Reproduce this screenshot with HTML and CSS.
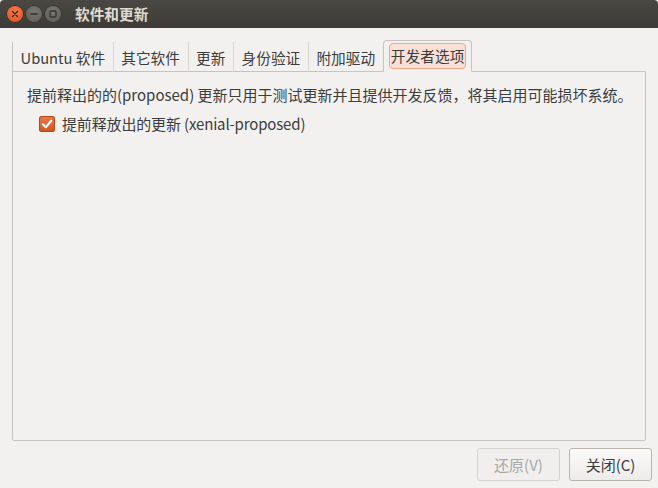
FILE: index.html
```html
<!DOCTYPE html>
<html lang="zh-CN">
<head>
<meta charset="utf-8">
<link rel="stylesheet" href="styles.css">
</head>
<body>
<div class="window">
  <div class="titlebar">
    <div class="wbtns">
      <span class="wbtn close">
        <svg width="16" height="16" viewBox="0 0 16 16"><path d="M5.5 5.5 L10.5 10.5 M10.5 5.5 L5.5 10.5" stroke="#3a2418" stroke-width="1.4" stroke-linecap="round"/></svg>
      </span>
      <span class="wbtn grey">
        <svg width="16" height="16" viewBox="0 0 16 16"><path d="M4.5 8 H11.5" stroke="#35342f" stroke-width="1.6"/></svg>
      </span>
      <span class="wbtn grey">
        <svg width="16" height="16" viewBox="0 0 16 16"><rect x="5" y="5" width="6" height="6" rx="1" fill="none" stroke="#35342f" stroke-width="1.4"/></svg>
      </span>
    </div>
    <div class="title">软件和更新</div>
  </div>
  <div class="content">
    <div class="tabs">
      <div class="tab first">Ubuntu 软件</div>
      <div class="tab">其它软件</div>
      <div class="tab">更新</div>
      <div class="tab">身份验证</div>
      <div class="tab">附加驱动</div>
      <div class="tab active"><span class="focus">开发者选项</span></div>
      <div class="tabfill"></div>
    </div>
    <div class="panel">
      <p class="desc">提前释出的的(proposed) 更新只用于测试更新并且提供开发反馈，将其启用可能损坏系统。</p>
      <label class="check">
        <span class="box">
          <svg width="16" height="16" viewBox="0 0 16 16"><path d="M3.8 8.2 L6.8 11.2 L12.3 4.8" fill="none" stroke="#fff" stroke-width="2.2" stroke-linecap="round" stroke-linejoin="round"/></svg>
        </span>
        <span class="label">提前释放出的更新 (xenial-proposed)</span>
      </label>
    </div>
    <div class="actions">
      <button class="btn disabled">还原(V)</button>
      <button class="btn">关闭(C)</button>
    </div>
  </div>
</div>
</body>
</html>
```
FILE: styles.css
```css
* { box-sizing: border-box; }
html, body { margin: 0; padding: 0; }
body {
  width: 658px;
  height: 488px;
  overflow: hidden;
  font-family: "Noto Sans CJK SC", "Noto Sans", sans-serif;
  background: #f2f1f0;
}
.window {
  width: 658px;
  height: 488px;
  display: flex;
  flex-direction: column;
  background: #f2f1f0;
}
.titlebar {
  height: 28px;
  background: linear-gradient(#494843, #3c3b37);
  display: flex;
  align-items: center;
  padding-left: 7px;
  border-radius: 4px 4px 0 0;
}
.wbtns { display: flex; gap: 3px; }
.wbtn {
  width: 16px;
  height: 16px;
  border-radius: 50%;
  display: flex;
}
.wbtn.close {
  background: radial-gradient(circle at 50% 35%, #f77b47, #e0501a);
  box-shadow: 0 0 0 0.5px #2d1b10;
}
.wbtn.grey {
  background: radial-gradient(circle at 50% 35%, #7a7873, #5c5b56);
  box-shadow: 0 0 0 0.5px #2b2a27;
}
.title {
  margin-left: 14px;
  color: #dfdbd2;
  font-size: 14.67px;
  font-weight: bold;
  line-height: 1;
  margin-top: 1px;
}
.content {
  flex: 1;
  display: flex;
  flex-direction: column;
  padding: 13px 12px 7px 12px;
}
.tabs {
  display: flex;
  align-items: flex-end;
  height: 31px;
  position: relative;
  z-index: 1;
  margin-bottom: -1px;
}
.tab {
  height: 30px;
  padding: 0 7.6px;
  border-left: 1px solid #d9d6d1;
  font-size: 14.67px;
  color: #3c3c3c;
  display: flex;
  align-items: center;
  white-space: nowrap;
}
.tab.first { border-left: 1px solid #c7c4bf; }
.tab.active {
  height: 32px;
  padding: 0 5px;
  border: 1px solid #c7c4bf;
  border-bottom: 1px solid #f2f1f0;
  border-radius: 4px 4px 0 0;
  background: #f2f1f0;
  align-items: flex-start;
  padding-top: 2px;
  letter-spacing: 0.1px;
}
.focus {
  display: block;
  border: 1px solid #f1a688;
  background: #f8e0d6;
  border-radius: 4px;
  padding: 0 1px;
  height: 26px;
  line-height: 24px;
  color: #3c3c3c;
}
.tabfill { flex: 1; }
.panel {
  flex: 1;
  border: 1px solid #c7c4bf;
  border-radius: 0 0 2px 2px;
  padding: 13px 14px;
}
.desc {
  margin: 0;
  font-size: 15px;
  color: #3c3c3c;
  line-height: 20px;
  white-space: nowrap;
}
.check {
  display: flex;
  align-items: center;
  gap: 7px;
  margin-top: 9px;
  margin-left: 12px;
  font-size: 15px;
  color: #3c3c3c;
  line-height: 20px;
}
.label { letter-spacing: -0.15px; }
.box {
  width: 16px;
  height: 16px;
  border-radius: 3px;
  background: linear-gradient(#ec7a47, #cf5520);
  box-shadow: inset 0 0 0 1px #b3481b;
  display: flex;
}
.actions {
  display: flex;
  justify-content: flex-end;
  gap: 9px;
  margin-top: 7px;
  margin-right: -6px;
}
.btn {
  width: 83px;
  height: 33px;
  border: 1px solid #b9b5ad;
  border-radius: 3px;
  background: linear-gradient(#fafaf9, #eeecea);
  font-family: "Noto Sans CJK SC", "Noto Sans", sans-serif;
  font-size: 15px;
  color: #3c3c3c;
  padding: 0;
}
.btn.disabled {
  color: #a9a8a5;
  border-color: #d5d2cd;
  background: #f0efed;
}
```
